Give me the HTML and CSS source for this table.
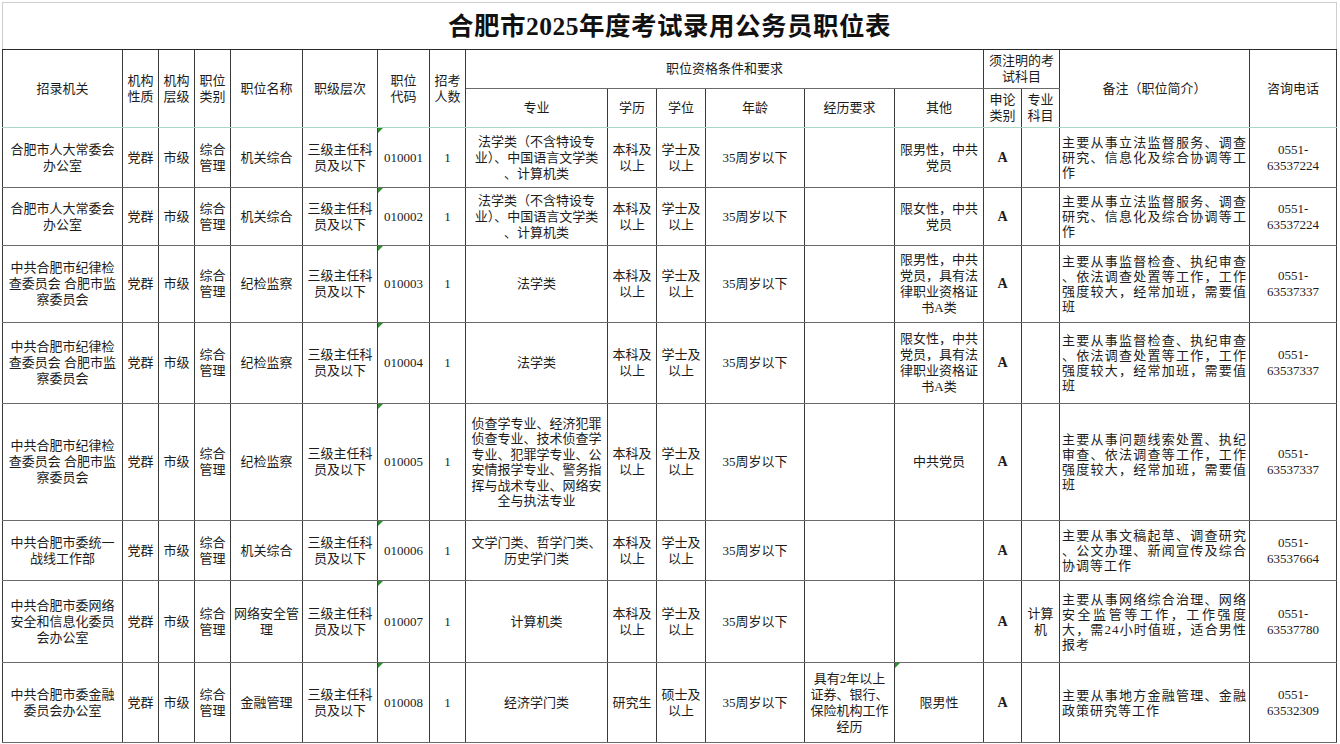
FILE: index.html
```html
<!DOCTYPE html>
<html lang="zh-CN">
<head>
<meta charset="utf-8">
<title>合肥市2025年度考试录用公务员职位表</title>
<link rel="stylesheet" href="styles.css">
</head>
<body>
<div class="sheet">
<table class="grid">
<colgroup>
<col class="c120"><col class="c36"><col class="c36"><col class="c36"><col class="c72"><col class="c75"><col class="c52"><col class="c36">
<col class="c142"><col class="c49"><col class="c49"><col class="c99"><col class="c90"><col class="c89"><col class="c38"><col class="c38"><col class="c190"><col class="c87">
</colgroup>
<tr class="r-title"><td class="title" colspan="18">合肥市2025年度考试录用公务员职位表</td></tr>
<tr class="r-h1">
<td class="hb" rowspan="2">招录机关</td>
<td class="hb" rowspan="2">机构<br>性质</td>
<td class="hb" rowspan="2">机构<br>层级</td>
<td class="hb" rowspan="2">职位<br>类别</td>
<td class="hb" rowspan="2">职位名称</td>
<td class="hb" rowspan="2">职级层次</td>
<td class="hb" rowspan="2">职位<br>代码</td>
<td class="hb" rowspan="2">招考<br>人数</td>
<td colspan="6">职位资格条件和要求</td>
<td colspan="2">须注明的考<br>试科目</td>
<td class="hb" rowspan="2">备注（职位简介）</td>
<td class="hb" rowspan="2">咨询电话</td>
</tr>
<tr class="r-h2">
<td class="hb">专业</td><td class="hb">学历</td><td class="hb">学位</td><td class="hb">年龄</td><td class="hb">经历要求</td><td class="hb">其他</td><td class="hb">申论<br>类别</td><td class="hb">专业<br>科目</td>
</tr>

<tr class="r60">
<td>合肥市人大常委会<br>办公室</td><td>党群</td><td>市级</td><td>综合<br>管理</td><td>机关综合</td><td>三级主任科<br>员及以下</td><td class="mark">010001</td><td>1</td>
<td>法学类（不含特设专<br>业）、中国语言文学类<br>、计算机类</td><td>本科及<br>以上</td><td>学士及<br>以上</td><td>35周岁以下</td><td></td><td>限男性，中共<br>党员</td><td class="grade">A</td><td></td>
<td class="note"><span class="fill">主要从事立法监督服务、调查</span><span class="fill">研究、信息化及综合协调等工</span><span>作</span></td><td>0551-<br>63537224</td>
</tr>

<tr class="r58">
<td>合肥市人大常委会<br>办公室</td><td>党群</td><td>市级</td><td>综合<br>管理</td><td>机关综合</td><td>三级主任科<br>员及以下</td><td class="mark">010002</td><td>1</td>
<td>法学类（不含特设专<br>业）、中国语言文学类<br>、计算机类</td><td>本科及<br>以上</td><td>学士及<br>以上</td><td>35周岁以下</td><td></td><td>限女性，中共<br>党员</td><td class="grade">A</td><td></td>
<td class="note"><span class="fill">主要从事立法监督服务、调查</span><span class="fill">研究、信息化及综合协调等工</span><span>作</span></td><td>0551-<br>63537224</td>
</tr>

<tr class="r77">
<td>中共合肥市纪律检<br>查委员会 合肥市监<br>察委员会</td><td>党群</td><td>市级</td><td>综合<br>管理</td><td>纪检监察</td><td>三级主任科<br>员及以下</td><td class="mark">010003</td><td>1</td>
<td>法学类</td><td>本科及<br>以上</td><td>学士及<br>以上</td><td>35周岁以下</td><td></td><td>限男性，中共<br>党员，具有法<br>律职业资格证<br>书A类</td><td class="grade">A</td><td></td>
<td class="note"><span class="fill">主要从事监督检查、执纪审查</span><span class="fill">、依法调查处置等工作，工作</span><span class="fill">强度较大，经常加班，需要值</span><span>班</span></td><td>0551-<br>63537337</td>
</tr>

<tr class="r81">
<td>中共合肥市纪律检<br>查委员会 合肥市监<br>察委员会</td><td>党群</td><td>市级</td><td>综合<br>管理</td><td>纪检监察</td><td>三级主任科<br>员及以下</td><td class="mark">010004</td><td>1</td>
<td>法学类</td><td>本科及<br>以上</td><td>学士及<br>以上</td><td>35周岁以下</td><td></td><td>限女性，中共<br>党员，具有法<br>律职业资格证<br>书A类</td><td class="grade">A</td><td></td>
<td class="note"><span class="fill">主要从事监督检查、执纪审查</span><span class="fill">、依法调查处置等工作，工作</span><span class="fill">强度较大，经常加班，需要值</span><span>班</span></td><td>0551-<br>63537337</td>
</tr>

<tr class="r117">
<td class="picked">中共合肥市纪律检<br>查委员会 合肥市监<br>察委员会</td><td>党群</td><td>市级</td><td>综合<br>管理</td><td>纪检监察</td><td>三级主任科<br>员及以下</td><td class="mark">010005</td><td>1</td>
<td class="tight">侦查学专业、经济犯罪<br>侦查专业、技术侦查学<br>专业、犯罪学专业、公<br>安情报学专业、警务指<br>挥与战术专业、网络安<br>全与执法专业</td><td>本科及<br>以上</td><td>学士及<br>以上</td><td>35周岁以下</td><td></td><td>中共党员</td><td class="grade">A</td><td></td>
<td class="note"><span class="fill">主要从事问题线索处置、执纪</span><span class="fill">审查、依法调查等工作，工作</span><span class="fill">强度较大，经常加班，需要值</span><span>班</span></td><td>0551-<br>63537337</td>
</tr>

<tr class="r60">
<td>中共合肥市委统一<br>战线工作部</td><td>党群</td><td>市级</td><td>综合<br>管理</td><td>机关综合</td><td>三级主任科<br>员及以下</td><td class="mark">010006</td><td>1</td>
<td>文学门类、哲学门类、<br>历史学门类</td><td>本科及<br>以上</td><td>学士及<br>以上</td><td>35周岁以下</td><td></td><td></td><td class="grade">A</td><td></td>
<td class="note"><span class="fill">主要从事文稿起草、调查研究</span><span class="fill">、公文办理、新闻宣传及综合</span><span>协调等工作</span></td><td>0551-<br>63537664</td>
</tr>

<tr class="r82">
<td>中共合肥市委网络<br>安全和信息化委员<br>会办公室</td><td>党群</td><td>市级</td><td>综合<br>管理</td><td>网络安全管<br>理</td><td>三级主任科<br>员及以下</td><td class="mark">010007</td><td>1</td>
<td>计算机类</td><td>本科及<br>以上</td><td>学士及<br>以上</td><td>35周岁以下</td><td></td><td></td><td class="grade">A</td><td>计算<br>机</td>
<td class="note"><span class="fill">主要从事网络综合治理、网络</span><span class="fill">安全监管等工作，工作强度</span><span class="fill">大，需24小时值班，适合男性</span><span>报考</span></td><td>0551-<br>63537780</td>
</tr>

<tr class="r80">
<td>中共合肥市委金融<br>委员会办公室</td><td>党群</td><td>市级</td><td>综合<br>管理</td><td>金融管理</td><td>三级主任科<br>员及以下</td><td class="mark">010008</td><td>1</td>
<td>经济学门类</td><td>研究生</td><td>硕士及<br>以上</td><td>35周岁以下</td><td>具有2年以上<br>证券、银行、<br>保险机构工作<br>经历</td><td class="mark">限男性</td><td class="grade">A</td><td></td>
<td class="note"><span class="fill">主要从事地方金融管理、金融</span><span>政策研究等工作</span></td><td>0551-<br>63532309</td>
</tr>
</table>
</div>
</body>
</html>
```
FILE: styles.css
```css
html, body {
  margin: 0;
  padding: 0;
  background: #ffffff;
}
body {
  font-family: "Liberation Serif", "Noto Sans CJK SC", serif;
  color: #1c1c1c;
}
.sheet {
  padding: 2px 0 0 2px;
}
.grid {
  border-collapse: collapse;
  table-layout: fixed;
  width: 1334px;
  font-size: 13px;
  line-height: 16px;
}
.grid td {
  border-left: 1px solid #3a3a3a;
  border-right: 1px solid #3a3a3a;
  border-top: 1px solid #6a6a6a;
  border-bottom: 1px solid #6a6a6a;
  padding: 0 1px;
  text-align: center;
  vertical-align: middle;
  overflow: hidden;
  position: relative;
}
.c120 { width: 120px; }
.c36 { width: 36px; }
.c72 { width: 72px; }
.c75 { width: 75px; }
.c52 { width: 52px; }
.c142 { width: 142px; }
.c49 { width: 49px; }
.c99 { width: 99px; }
.c90 { width: 90px; }
.c89 { width: 89px; }
.c38 { width: 38px; }
.c190 { width: 190px; }
.c87 { width: 87px; }

.r-title { height: 47px; }
.r-h1 { height: 39px; }
.r-h2 { height: 39px; }
.r60 { height: 60px; }
.r58 { height: 58px; }
.r77 { height: 77px; }
.r81 { height: 81px; }
.r117 { height: 117px; }
.r82 { height: 82px; }
.r80 { height: 80px; }

.grid td.title {
  border-top: 1px solid #cfcfcf;
  border-left: 1px solid #cfcfcf;
  border-right: 1px solid #cfcfcf;
  border-bottom: 1px solid #2a2a2a;
  font-size: 25.5px;
  font-weight: bold;
  letter-spacing: 0.5px;
  line-height: 30px;
  color: #111;
  padding-top: 2px;
}
.r-h1 td, .r-h2 td {
  border-top-color: #2a2a2a;
}
.grid td.hb {
  border-bottom: 1px solid #a9d6c6;
}
.grid td.grade {
  font-weight: bold;
  font-size: 14px;
}
.grid td.tight {
  line-height: 15.5px;
}
.grid td.note {
  text-align: left;
  line-height: 15px;
  padding: 0 2px;
  letter-spacing: 1px;
}
.note span {
  display: block;
}
.note .fill {
  text-align: justify;
  text-align-last: justify;
}
.grid td.mark::before {
  content: "";
  position: absolute;
  top: 0;
  left: 0;
  border-top: 5px solid #2f8f2f;
  border-right: 5px solid transparent;
}
.grid td.picked {
  box-shadow: -2px 0 0 #4d9e3c;
}
```
